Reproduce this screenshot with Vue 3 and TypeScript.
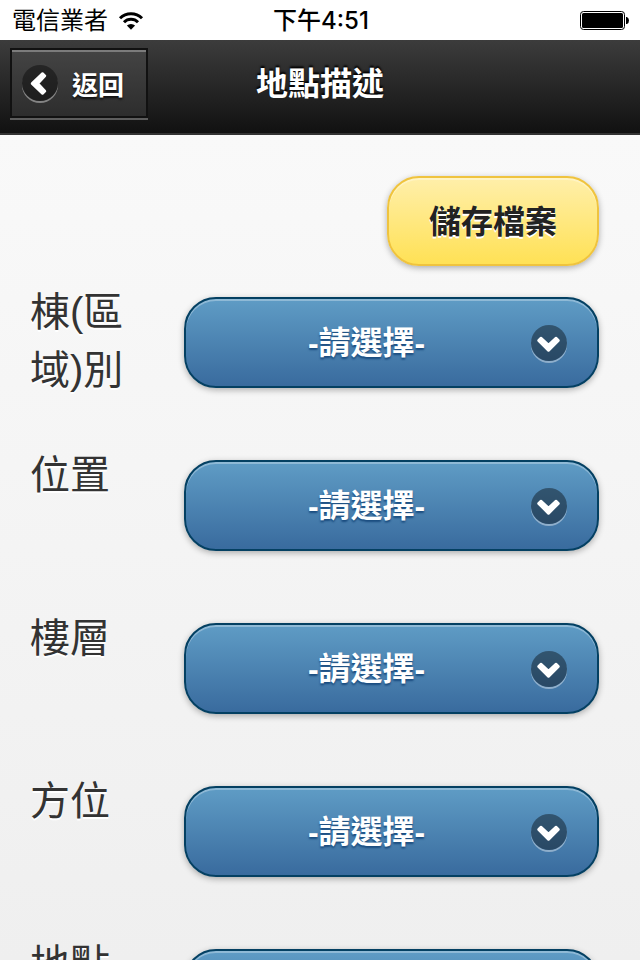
<script setup lang="ts">
import { ref } from 'vue'

interface Field {
  id: string
  label: string
}

const fields: Field[] = [
  { id: 'building', label: '棟(區域)別' },
  { id: 'position', label: '位置' },
  { id: 'floor', label: '樓層' },
  { id: 'direction', label: '方位' },
  { id: 'place', label: '地點' },
]

const values = ref<Record<string, string>>(
  Object.fromEntries(fields.map((field) => [field.id, ''])),
)
</script>

<template>
  <div class="screen">
    <div class="status">
      <div class="carrier">
        <span>電信業者</span>
        <svg class="wifi" viewBox="0 0 26 20" aria-hidden="true">
          <path d="M2 7.2a15.6 15.6 0 0 1 22 0" />
          <path d="M6 11.2a9.9 9.9 0 0 1 14 0" />
          <path class="dot" d="M8.9 14.6a5.8 5.8 0 0 1 8.2 0L13 18.7z" />
        </svg>
      </div>
      <span class="time">下午4:51</span>
      <svg class="battery" viewBox="0 0 50 20" aria-hidden="true">
        <rect class="shell" x="0.5" y="0.5" width="44" height="18" rx="3" />
        <rect x="2" y="2" width="41" height="15" rx="1.5" />
        <path d="M46 6h1q2 1 2 3.500t-2 3.500h-1z" />
      </svg>
    </div>

    <header class="header">
      <button type="button" class="back">
        <span class="disc">
          <svg viewBox="0 0 36 36" aria-hidden="true">
            <path d="M20.500 8.500L23 11l-7 7.500 7 7.500-2.500 2.500-10.500-10z" />
          </svg>
        </span>
        <span>返回</span>
      </button>
      <h1 class="title">地點描述</h1>
    </header>

    <main class="content">
      <form class="form" @submit.prevent>
        <button type="submit" class="save">儲存檔案</button>
        <div v-for="field in fields" :key="field.id" class="row">
          <label class="label" :for="field.id">{{ field.label }}</label>
          <div class="picker">
            <select :id="field.id" v-model="values[field.id]" class="select">
              <option value="">-請選擇-</option>
            </select>
            <span class="disc arrow">
              <svg viewBox="0 0 36 36" aria-hidden="true">
                <path d="M7.500 15.500L10 13l7.500 7 7.500-7 2.500 2.500-10 10z" />
              </svg>
            </span>
          </div>
        </div>
      </form>
    </main>
  </div>
</template>

<style>
body {
  margin: 0;
}
</style>

<style scoped>
.screen {
  display: flex;
  flex-direction: column;
  height: 100vh;
  overflow: hidden;
  font-family: "Liberation Sans", "Noto Sans CJK TC", sans-serif;
  color: #333;
  background: #fff;
}

.status {
  display: grid;
  grid-template-columns: 1fr auto 1fr;
  align-items: center;
  flex: none;
  box-sizing: border-box;
  height: 40px;
  padding: 1px 10px 0 12px;
  font-family: Inter, "Noto Sans CJK TC", sans-serif;
  font-size: 24px;
  line-height: 38px;
  color: #000;
}

.carrier {
  display: flex;
  align-items: center;
  gap: 10px;
}

.wifi {
  width: 26px;
  height: 20px;
  fill: none;
  stroke: #000;
  stroke-width: 3;
}

.wifi .dot {
  fill: #000;
  stroke: none;
}

.time {
  font-weight: 500;
}

.battery {
  justify-self: end;
  width: 50px;
  height: 20px;
}

.battery .shell {
  fill: #fff;
  stroke: #000;
  stroke-width: 1;
}

.header {
  display: grid;
  grid-template-columns: 1fr auto 1fr;
  align-items: start;
  flex: none;
  box-sizing: border-box;
  height: 95px;
  padding: 8px 10px 0;
  border-bottom: 2px solid #333;
  background: linear-gradient(#3c3c3c, #111);
  color: #fff;
}

.back {
  display: flex;
  align-items: center;
  justify-self: start;
  gap: 14px;
  box-sizing: border-box;
  height: 70px;
  padding: 0 22px 0 10px;
  border: 2px solid #111;
  background: linear-gradient(#444, #2d2d2d);
  box-shadow: inset 0 2px 0 rgba(255, 255, 255, 0.3), 0 2px 0 rgba(255, 255, 255, 0.3);
  font: bold 26px "Liberation Sans", "Noto Sans CJK TC", sans-serif;
  color: #fff;
  text-shadow: 0 2px 2px #111;
}

.disc {
  display: block;
  width: 36px;
  height: 36px;
  border-radius: 50%;
  background: rgba(0, 0, 0, 0.4);
  box-shadow: 0 2px 0 rgba(255, 255, 255, 0.4);
}

.disc svg {
  display: block;
  width: 36px;
  height: 36px;
  fill: #fff;
  stroke: #fff;
  stroke-width: 2.5;
  stroke-linejoin: round;
}

.title {
  margin: 0;
  padding-top: 12px;
  font-size: 32px;
  line-height: 48px;
  font-weight: bold;
  text-shadow: 0 -2px 2px #000;
}

.content {
  flex: 1;
  min-height: 0;
  overflow: hidden;
  padding: 41px 41px 0 30px;
  background: linear-gradient(#f9f9f9, #efefef);
}

.form {
  display: flex;
  flex-direction: column;
}

.save {
  align-self: flex-end;
  box-sizing: border-box;
  height: 90px;
  margin-bottom: 31px;
  padding: 0 40px 4px;
  border: 2px solid #efc33e;
  border-radius: 32px;
  background: linear-gradient(#ffefaa, #ffe155);
  box-shadow: 0 2px 6px rgba(0, 0, 0, 0.3), inset 0 2px 0 rgba(255, 255, 255, 0.3);
  font: bold 32px "Liberation Sans", "Noto Sans CJK TC", sans-serif;
  color: #222;
  text-shadow: 0 2px 0 #fff;
}

.row {
  display: grid;
  grid-template-columns: 22% 1fr;
  column-gap: 29px;
  align-items: start;
  min-height: 163px;
}

.label {
  margin-top: -14px;
  font-size: 40px;
  line-height: 58px;
  text-shadow: 0 2px 0 #fff;
}

.picker {
  position: relative;
}

.select {
  display: block;
  box-sizing: border-box;
  width: 100%;
  height: 91px;
  margin: 0;
  padding: 0 74px 0 24px;
  appearance: none;
  border: 2px solid #044062;
  border-radius: 32px;
  background: linear-gradient(#5f9cc5, #396b9e);
  box-shadow: 0 2px 6px rgba(0, 0, 0, 0.3), inset 0 2px 0 rgba(255, 255, 255, 0.3);
  font: bold 32px "Liberation Sans", "Noto Sans CJK TC", sans-serif;
  color: #fff;
  text-align: center;
  text-align-last: center;
  text-shadow: 0 2px 2px #194b7e;
}

.arrow {
  position: absolute;
  top: 28px;
  right: 32px;
  pointer-events: none;
}
</style>
